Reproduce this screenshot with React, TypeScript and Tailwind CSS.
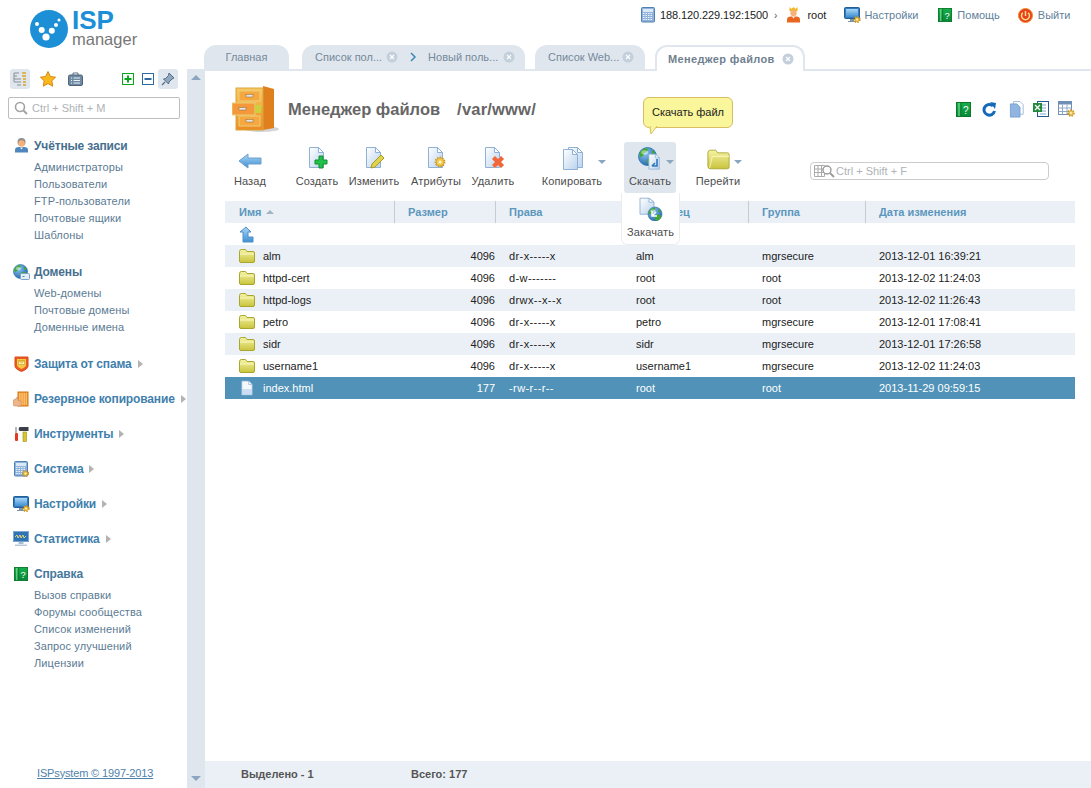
import type { ReactNode } from 'react';

const Gear = ({ x, y, r = 3 }: { x: number; y: number; r?: number }) => (
  <g>
    <circle cx={x} cy={y} r={r + 0.6} fill="none" stroke="#c8901e" strokeWidth={1.6} strokeDasharray="1.4 1.2" />
    <circle cx={x} cy={y} r={r} fill="#f2c94a" stroke="#c8901e" strokeWidth={0.6} />
    <circle cx={x} cy={y} r={r * 0.38} fill="#fff6cf" />
  </g>
);

const Ico = ({ w, h, vb, children }: { w: number; h: number; vb?: string; children: ReactNode }) => (
  <svg width={w} height={h} viewBox={vb ?? `0 0 ${w} ${h}`} className="shrink-0">
    {children}
  </svg>
);

const Page = ({ x = 0, y = 0 }: { x?: number; y?: number }) => (
  <g transform={`translate(${x} ${y})`}>
    <path d="M4.5 1.5h9l5 5v15h-14z" fill="url(#gPage)" stroke="#8fb1d6" />
    <path d="M13.5 1.5v5h5z" fill="#fff" stroke="#8fb1d6" />
  </g>
);

const Globe = ({ x, y, r }: { x: number; y: number; r: number }) => (
  <g transform={`translate(${x} ${y}) scale(${r / 8})`}>
    <circle r="8" fill="url(#gGlobe)" stroke="#1f6fa8" strokeWidth="0.7" />
    <path d="M-7-3c2-3 5-5 7-4 1 2-1 3-3 4 0 2-2 4-4 3zM1 1c3-1 6 0 6 2-1 3-4 5-6 4-2-2-1-4 0-6zM4-6l3 3-3 1z" fill="#43a82f" />
    <ellipse cx="-2.5" cy="-3.5" rx="3" ry="2" fill="#fff" opacity="0.45" />
  </g>
);

const Folder = () => (
  <Ico w={16} h={14}>
    <path d="M.5 2.5q0-2 2-2h4l1.5 2h6q1.500 0 1.500 1.500v8q0 1.500-1.500 1.500h-12q-1.500 0-1.500-1.500z" fill="url(#gFolder)" stroke="#a9a52e" />
    <path d="M1 5h14" stroke="#fbf9c0" />
  </Ico>
);

const SmallPage = () => (
  <Ico w={16} h={16} vb="0 0 23 23">
    <path d="M4 1.500h10l5 5v15h-15z" fill="#f4f8fd" stroke="#8fb1d6" />
    <path d="M14 1.500v5h5z" fill="#fff" stroke="#8fb1d6" />
    <path d="M4.500 13h14v8.500h-14z" fill="#b9d2ee" opacity="0.7" />
  </Ico>
);

const Book = ({ s = 15 }: { s?: number }) => (
  <Ico w={s} h={s} vb="0 0 15 15">
    <rect x=".5" y=".5" width="14" height="14" fill="url(#gGreen)" stroke="#0a7a2a" />
    <path d="M3 1v13" stroke="#8fe6a4" />
    <path d="M5 1v13" stroke="#0a7a2a" />
    <text x="9.700" y="11.500" textAnchor="middle" fontSize="10" fill="#fff" fontFamily="Liberation Sans">?</text>
  </Ico>
);

const Monitor = () => (
  <Ico w={17} h={16}>
    <rect x=".5" y=".5" width="15" height="11" rx="1" fill="#2f7cc0" stroke="#245e92" />
    <rect x="2" y="2" width="12" height="8" fill="url(#gBlue)" />
    <path d="M6 12h4v2h2v1h-8v-1h2z" fill="#7d94ad" />
    <Gear x={13} y={12.500} r={2.200} />
  </Ico>
);

const Calc = ({ gear }: { gear?: boolean }) => (
  <Ico w={15} h={16}>
    <rect x=".5" y=".5" width="13" height="14.500" rx="1" fill="#8fb3dc" stroke="#4f7fb5" />
    <rect x="2" y="2" width="10" height="3" fill="#dbe8f6" />
    {[6.500, 8.500, 10.500, 12.500].map((y) => (
      <path key={y} d={`M2 ${y}h10`} stroke="#eaf1fa" strokeDasharray="1.500 1" />
    ))}
    {gear && <Gear x={11.500} y={12.500} r={2.200} />}
  </Ico>
);

const UserIcon = ({ crown }: { crown?: boolean }) => (
  <Ico w={15} h={16}>
    {crown && <path d="M3.500 0l2 2 2-2 2 2 2-2v4h-8z" fill="#f2b41b" />}
    {!crown && <circle cx="7.500" cy="4" r="4" fill="#8f8f8f" />}
    <circle cx="7.500" cy={crown ? 6 : 5.500} r="3.200" fill="#f7b27a" />
    <path d={crown ? 'M1 15.500v-3q0-3 4-3h5q4 0 4 3v3z' : 'M1 14.500v-2.500q0-3 4-3h5q4 0 4 3v2.500z'} fill={crown ? '#e8661f' : '#4e86bd'} />
    <path d="M6 9.500l1.500 2 1.500-2z" fill="#fff" />
  </Ico>
);

const Triangle = () => (
  <span className="ml-[6px] inline-block h-0 w-0 border-y-[4px] border-l-[5px] border-y-transparent border-l-[#b3b3b3]" />
);

const DropArrow = () => (
  <span className="h-0 w-0 border-x-[4px] border-t-[4px] border-x-transparent border-t-[#8ba6c0]" />
);

const CloseX = () => (
  <svg width="12" height="12" viewBox="0 0 12 12" className="shrink-0">
    <circle cx="6" cy="6" r="5.500" fill="#c3cfdb" />
    <path d="M4 4l4 4M8 4l-4 4" stroke="#fff" strokeWidth="1.200" />
  </svg>
);

const navIcons: Record<string, ReactNode> = {
  user: <UserIcon />,
  domains: (
    <Ico w={17} h={16}>
      <Globe x={7.500} y={7.500} r={7} />
      <rect x="7.500" y="9.500" width="9" height="6" rx="1" fill="#e4eef8" stroke="#7fa3c8" />
      <path d="M9.500 12.500h2" stroke="#5f8ab5" />
    </Ico>
  ),
  spam: (
    <Ico w={15} h={16}>
      <path d="M1 1h13v9q0 3-6.500 5.500-6.500-2.500-6.500-5.500z" fill="#e95a24" stroke="#d94a1a" />
      <path d="M3 3h9v6q0 2-4.500 4-4.500-2-4.500-4z" fill="#f6c945" />
      <path d="M4.500 4.500h6v4h-6zM4.500 4.500l3 2.500 3-2.500" fill="#fff3b5" stroke="#c59a2a" strokeWidth=".6" />
    </Ico>
  ),
  backup: (
    <Ico w={17} h={16}>
      <rect x="5" y="1" width="10" height="14" fill="#f29a35" stroke="#cf7717" />
      {[3, 5, 7, 9, 11, 13].map((y) => (
        <path key={y} d={`M6 ${y}h8`} stroke="#ffe0a8" strokeDasharray="1.500 .8" />
      ))}
      <path d="M0 11q0-3 3-3l1-2 1 .5v3l3 .5v5h-6q-2 0-2-2z" fill="#eeb58c" stroke="#c98a5c" strokeWidth=".6" />
    </Ico>
  ),
  tools: (
    <Ico w={16} h={16}>
      <rect x="2" y="7" width="3" height="8" rx="1" fill="#e23b1f" />
      <path d="M3 1v6" stroke="#9aa5ad" strokeWidth="1.500" />
      <rect x="10" y="6" width="3.500" height="9.500" fill="#d9c72a" stroke="#9a8d14" strokeWidth=".6" />
      <path d="M6.500 1h9v4h-9l-1-2z" fill="#3b3f45" />
    </Ico>
  ),
  system: <Calc gear />,
  settings: <Monitor />,
  stats: (
    <Ico w={16} h={16}>
      <rect x=".5" y=".5" width="15" height="10" fill="#2e73b6" stroke="#7ea6cd" />
      <path d="M2 6l2-2 1 3 2-3 1 3 2-3 1 3 2-2" stroke="#ffe66b" fill="none" strokeWidth=".8" />
      <path d="M5.500 11h5v2h-5z" fill="#a8bdd2" />
      <path d="M2 13.500h12v1.500h-12z" fill="#b7c9db" />
    </Ico>
  ),
  help: <Book s={14} />,
};

type NavGroup = { icon: string; title: string; items?: string[]; color: string };

const nav: NavGroup[] = [
  {
    icon: 'user',
    title: 'Учётные записи',
    color: 'text-[#47708f]',
    items: ['Администраторы', 'Пользователи', 'FTP-пользователи', 'Почтовые ящики', 'Шаблоны'],
  },
  { icon: 'domains', title: 'Домены', color: 'text-[#47708f]', items: ['Web-домены', 'Почтовые домены', 'Доменные имена'] },
  { icon: 'spam', title: 'Защита от спама', color: 'text-[#3f80ad]' },
  { icon: 'backup', title: 'Резервное копирование', color: 'text-[#3f80ad]' },
  { icon: 'tools', title: 'Инструменты', color: 'text-[#3f80ad]' },
  { icon: 'system', title: 'Система', color: 'text-[#3f80ad]' },
  { icon: 'settings', title: 'Настройки', color: 'text-[#3f80ad]' },
  { icon: 'stats', title: 'Статистика', color: 'text-[#3f80ad]' },
  {
    icon: 'help',
    title: 'Справка',
    color: 'text-[#47789c]',
    items: ['Вызов справки', 'Форумы сообщества', 'Список изменений', 'Запрос улучшений', 'Лицензии'],
  },
];

const rows = [
  { name: 'alm', size: '4096', perm: 'dr-x-----x', owner: 'alm', group: 'mgrsecure', date: '2013-12-01 16:39:21' },
  { name: 'httpd-cert', size: '4096', perm: 'd-w-------', owner: 'root', group: 'root', date: '2013-12-02 11:24:03' },
  { name: 'httpd-logs', size: '4096', perm: 'drwx--x--x', owner: 'root', group: 'root', date: '2013-12-02 11:26:43' },
  { name: 'petro', size: '4096', perm: 'dr-x-----x', owner: 'petro', group: 'mgrsecure', date: '2013-12-01 17:08:41' },
  { name: 'sidr', size: '4096', perm: 'dr-x-----x', owner: 'sidr', group: 'mgrsecure', date: '2013-12-01 17:26:58' },
  { name: 'username1', size: '4096', perm: 'dr-x-----x', owner: 'username1', group: 'mgrsecure', date: '2013-12-02 11:24:03' },
];

const ToolItem = ({
  w,
  ml,
  label,
  icon,
  arrow,
}: {
  w: string;
  ml: string;
  label: string;
  icon: ReactNode;
  arrow?: string;
}) => (
  <div className={`${w} ${ml} relative flex h-[51px] shrink-0 flex-col items-center`}>
    <div className="flex h-[28px] items-end justify-center">{icon}</div>
    <div className="mt-[4px] text-[11px] leading-[14px] tracking-[0.12px] text-[#4d4d4d]">{label}</div>
    {arrow && (
      <span className={`absolute top-[18px] flex ${arrow}`}>
        <DropArrow />
      </span>
    )}
  </div>
);

export default function App() {
  return (
    <div className="relative flex h-[788px] w-[1091px] overflow-hidden bg-white font-['Liberation_Sans',sans-serif] text-[11px]">
      {/* shared gradients */}
      <svg width="0" height="0" className="absolute">
        <defs>
          <linearGradient id="gPage" x1="0" y1="0" x2="1" y2="1">
            <stop offset="0" stopColor="#ffffff" />
            <stop offset="1" stopColor="#b9d2ee" />
          </linearGradient>
          <linearGradient id="gFolder" x1="0" y1="0" x2="0" y2="1">
            <stop offset="0" stopColor="#f6f3a6" />
            <stop offset="1" stopColor="#c9c43c" />
          </linearGradient>
          <radialGradient id="gGlobe" cx="0.35" cy="0.3" r="0.8">
            <stop offset="0" stopColor="#8cc8f2" />
            <stop offset="1" stopColor="#1c5fa5" />
          </radialGradient>
          <linearGradient id="gGreen" x1="0" y1="0" x2="0" y2="1">
            <stop offset="0" stopColor="#17b04a" />
            <stop offset="1" stopColor="#07873a" />
          </linearGradient>
          <linearGradient id="gBlue" x1="0" y1="0" x2="0" y2="1">
            <stop offset="0" stopColor="#a9d6f7" />
            <stop offset="1" stopColor="#3f8fd2" />
          </linearGradient>
          <linearGradient id="gOrange" x1="0" y1="0" x2="0" y2="1">
            <stop offset="0" stopColor="#f8c860" />
            <stop offset="1" stopColor="#ee8a22" />
          </linearGradient>
        </defs>
      </svg>

      {/* Sidebar */}
      <aside className="flex h-full w-[187px] shrink-0 flex-col">
        <div className="flex h-[69px] items-start pl-[30px] pt-[10px]">
          <svg width="38" height="38" viewBox="0 0 38 38">
            <circle cx="19" cy="19" r="19" fill="#1d8fd6" />
            <circle cx="16" cy="27" r="3.600" fill="#fff" />
            <circle cx="11.700" cy="20" r="3" fill="#fff" />
            <circle cx="21.800" cy="20.700" r="3" fill="#fff" />
            <circle cx="7" cy="14" r="2" fill="#fff" />
            <circle cx="26" cy="15" r="2" fill="#fff" />
            <circle cx="29" cy="10" r="1.500" fill="#fff" />
          </svg>
          <div className="ml-[4px] flex flex-col">
            <span className="h-[20px] text-[26px] font-bold leading-[20px] text-[#1d8fd6]">ISP</span>
            <span className="h-[19px] text-[16.5px] leading-[19px] text-[#777]">manager</span>
          </div>
        </div>

        <div className="flex h-[20px] items-center pl-[10px]">
          <span className="flex h-[20px] w-[20px] items-center justify-center rounded-[3px] bg-[#dfe6ee]">
            <Ico w={14} h={14}>
              <path d="M1 1h5M1 4h3M4 7h4M4 10h4M4 13h4M1 1v6h3M1 7v3h3" stroke="#8a8f94" fill="none" />
              <path d="M9 1h4M9 4h4M10 7h3M10 10h3M10 13h3" stroke="#d9a52a" strokeWidth="1.500" />
            </Ico>
          </span>
          <span className="ml-[10px] flex">
            <Ico w={16} h={16}>
              <path d="M8 .5l2.400 5 5.200.7-3.800 3.600.9 5.400-4.700-2.600-4.700 2.600.9-5.400-3.800-3.600 5.200-.7z" fill="#f7b71d" stroke="#d88a10" />
            </Ico>
          </span>
          <span className="ml-[12px] flex">
            <Ico w={15} h={14}>
              <path d="M5 3v-2h5v2" fill="none" stroke="#5d7288" />
              <rect x=".5" y="3" width="14" height="10.500" rx="1.500" fill="#6f8aa3" stroke="#4d6378" />
              <path d="M3 6h1M3 8.500h1M3 11h1M5.500 6h6.500M5.500 8.500h6.500M5.500 11h6.500" stroke="#e9eff5" />
            </Ico>
          </span>
          <span className="ml-[39px] flex">
            <Ico w={12} h={12}>
              <rect x=".5" y=".5" width="11" height="11" fill="#fff" stroke="#0aa51f" />
              <path d="M6 2.500v7M2.500 6h7" stroke="#0aa51f" strokeWidth="2" />
            </Ico>
          </span>
          <span className="ml-[8px] flex">
            <Ico w={12} h={12}>
              <rect x=".5" y=".5" width="11" height="11" fill="#fff" stroke="#2f6a9f" />
              <path d="M2.500 6h7" stroke="#2f6a9f" strokeWidth="2" />
            </Ico>
          </span>
          <span className="ml-[4px] flex h-[20px] w-[20px] items-center justify-center rounded-[3px] bg-[#dfe6ee]">
            <Ico w={14} h={14}>
              <path d="M8 1l5 5-2 1-3 3-.5 2-5-5 2-.5 3-3z" fill="#8ea6be" stroke="#546c84" />
              <path d="M4 10l-3 3" stroke="#546c84" strokeWidth="1.200" />
            </Ico>
          </span>
        </div>

        <div className="ml-[8px] mt-[8px] flex h-[22px] w-[172px] items-center rounded-[2px] border border-[#bdbdbd] pl-[5px]">
          <Ico w={14} h={14}>
            <circle cx="6" cy="6" r="4.500" fill="none" stroke="#a3a3a3" strokeWidth="1.600" />
            <path d="M9.500 9.500l3.500 3.500" stroke="#a3a3a3" strokeWidth="2" />
          </Ico>
          <span className="ml-[4px] text-[11px] text-[#adb3b8]">Ctrl + Shift + M</span>
        </div>

        <nav className="mt-[17px]">
          {nav.map((g) => (
            <div key={g.title} className={g.items ? 'mb-[18px]' : 'mb-[15px]'}>
              <div className="flex h-[20px] items-center">
                <span className="flex w-[34px] shrink-0 justify-center pl-[8px]">{navIcons[g.icon]}</span>
                <span className={`whitespace-nowrap text-[12px] font-bold tracking-[-0.15px] ${g.color}`}>{g.title}</span>
                {!g.items && <Triangle />}
              </div>
              {g.items && (
                <ul className="mt-[3px] pl-[34px]">
                  {g.items.map((item) => (
                    <li key={item} className="h-[17px] text-[11px] leading-[17px] tracking-[0.12px] text-[#5b7b94]">
                      {item}
                    </li>
                  ))}
                </ul>
              )}
            </div>
          ))}
        </nav>

        <div className="mt-auto pb-[7px] pl-[37px]">
          <a className="text-[11px] leading-[15px] tracking-[-0.15px] text-[#4f82ab] underline">ISPsystem © 1997-2013</a>
        </div>
      </aside>

      {/* Splitter */}
      <div className="mt-[69px] flex w-[18px] shrink-0 flex-col items-center justify-between bg-[#dfe6ee] pb-[7px] pt-[6px]">
        <span className="h-0 w-0 border-x-[5px] border-b-[5px] border-x-transparent border-b-[#8ba6c0]" />
        <span className="h-0 w-0 border-x-[5px] border-t-[5px] border-x-transparent border-t-[#8ba6c0]" />
      </div>

      {/* Main */}
      <main className="flex min-w-0 flex-1 flex-col">
        <header className="mb-[15px] flex h-[30px] items-center pl-[436px] text-[11px]">
          <Calc />
          <span className="ml-[4px] tracking-[-0.1px] text-[#222]">188.120.229.192:1500</span>
          <span className="ml-[6px] text-[10px] text-[#555]">›</span>
          <span className="ml-[9px] flex"><UserIcon crown /></span>
          <span className="ml-[6px] text-[#222]">root</span>
          <span className="ml-[18px] flex"><Monitor /></span>
          <span className="ml-[3px] text-[#5f7f9a]">Настройки</span>
          <span className="ml-[20px] flex"><Book s={14} /></span>
          <span className="ml-[5px] text-[#5f7f9a]">Помощь</span>
          <span className="ml-[18px] flex">
            <Ico w={15} h={15}>
              <circle cx="7.500" cy="7.500" r="7" fill="#e8401c" stroke="#f08a2a" />
              <path d="M4.800 4.800a4 4 0 1 0 5.400 0M7.500 3v5" fill="none" stroke="#ffe08a" strokeWidth="1.500" />
            </Ico>
          </span>
          <span className="ml-[5px] text-[#5f7f9a]">Выйти</span>
        </header>

        {/* Tabs */}
        <div className="flex h-[26px] items-end border-b-2 border-[#dfe6ee] text-[11px] text-[#75899a]">
          <div className="-ml-px flex h-[24px] w-[85px] items-center justify-center rounded-t-[12px] bg-[#dfe6ee]">Главная</div>
          <div className="ml-[13px] flex h-[24px] w-[223px] items-center rounded-t-[12px] bg-[#dfe6ee] pl-[13px]">
            <span>Список пол...</span>
            <span className="ml-[4px] flex"><CloseX /></span>
            <svg width="8" height="10" viewBox="0 0 8 10" className="ml-[11px]">
              <path d="M2 1l4 4-4 4" fill="none" stroke="#3f86b8" strokeWidth="1.500" />
            </svg>
            <span className="ml-[11px]">Новый поль...</span>
            <span className="ml-[5px] flex"><CloseX /></span>
          </div>
          <div className="ml-[10px] flex h-[24px] w-[110px] items-center rounded-t-[12px] bg-[#dfe6ee] pl-[13px]">
            <span>Список Web...</span>
            <span className="ml-[3px] flex"><CloseX /></span>
          </div>
          <div className="-mb-[2px] ml-[10px] flex h-[26px] w-[150px] items-center rounded-t-[12px] border-2 border-b-0 border-[#dfe6ee] bg-white pl-[11px] font-bold tracking-[0.35px] text-[#6f8090]">
            <span>Менеджер файлов</span>
            <span className="ml-[7px] flex"><CloseX /></span>
          </div>
        </div>

        {/* Content */}
        <section className="relative flex-1 pl-[20px] pr-[16px]">
          <div className="mt-[14px] flex h-[48px] items-center">
            <svg width="48" height="48" viewBox="0 0 48 48" className="ml-[7px] shrink-0">
              <ellipse cx="30" cy="44" rx="17" ry="3" fill="#888" opacity="0.35" />
              <path d="M31 1l11 3v39l-11 2z" fill="#e07f1e" />
              <rect x="4" y="3" width="27" height="42" fill="url(#gOrange)" stroke="#d9a53a" />
              <rect x="7" y="6" width="21" height="10" fill="#f7a740" stroke="#e9cf78" />
              <rect x="7" y="31" width="21" height="10" fill="#f7a740" stroke="#e9cf78" />
              <rect x="0" y="18" width="23" height="12" fill="#f5983a" stroke="#e9cf78" />
              <rect x="23" y="20" width="6" height="8" fill="#c9d23e" />
              <rect x="14" y="9.500" width="7" height="2.500" fill="#e5e5e5" stroke="#8a6a3a" strokeWidth=".5" />
              <rect x="7" y="22.500" width="7" height="2.500" fill="#e5e5e5" stroke="#8a6a3a" strokeWidth=".5" />
              <rect x="14" y="34.500" width="7" height="2.500" fill="#e5e5e5" stroke="#8a6a3a" strokeWidth=".5" />
            </svg>
            <h1 className="ml-[8px] text-[16.5px] font-bold text-[#666]">Менеджер файлов</h1>
            <span className="ml-[17px] text-[16.5px] font-bold tracking-[0.2px] text-[#666]">/var/www/</span>
            <div className="ml-auto flex items-center">
              <Book s={15} />
              <span className="ml-[11px] flex">
                <Ico w={15} h={15}>
                  <path d="M12.500 9a5.300 5.300 0 1 1-1.500-5" fill="none" stroke="#1469b8" strokeWidth="3" />
                  <path d="M8 0l6 1-1 6z" fill="#1469b8" />
                </Ico>
              </span>
              <span className="ml-[11px] flex">
                <Ico w={16} h={17} vb="0 0 20 21">
                  <path d="M7 .5h8l4 4v12h-12z" fill="#fff" stroke="#8fb1d6" />
                  <path d="M3 3.500h8l4 4v12.500h-12z" fill="#8fb5e0" stroke="#6f9bcc" />
                </Ico>
              </span>
              <span className="ml-[9px] flex">
                <Ico w={16} h={16}>
                  <rect x="4.500" y=".5" width="11" height="15" fill="#fff" stroke="#1f5b92" />
                  <path d="M7 4h6M7 7h6M7 10h6M7 13h6" stroke="#7fa6cc" />
                  <rect x="0" y="2" width="9" height="9" fill="#1f8a3a" />
                  <path d="M2 4l5 5M7 4l-5 5" stroke="#fff" strokeWidth="1.300" />
                </Ico>
              </span>
              <span className="ml-[9px] flex">
                <Ico w={17} h={16}>
                  <rect x=".5" y=".5" width="13" height="13" fill="#fff" stroke="#6f8fb5" />
                  <rect x=".5" y=".5" width="13" height="3" fill="#6f8fb5" />
                  <path d="M4.500 3.500v10M9 3.500v10M.5 7h13M.5 10.500h13" stroke="#8eaacb" />
                  <Gear x={13} y={12} r={2.400} />
                </Ico>
              </span>
            </div>
          </div>

          {/* Toolbar */}
          <div className="mt-[9px] flex">
            <ToolItem
              w="w-[50px]"
              ml="ml-0"
              label="Назад"
              icon={
                <Ico w={24} h={20} vb="0 -3 24 20">
                  <path d="M1 8l9-7v4h13v6h-13v4z" fill="url(#gBlue)" stroke="#6f9fcf" />
                </Ico>
              }
            />
            <ToolItem
              w="w-[46px]"
              ml="ml-[19px]"
              label="Создать"
              icon={
                <Ico w={24} h={24}>
                  <Page />
                  <path d="M14 10h4v4h4v4h-4v4h-4v-4h-4v-4h4z" fill="#22c24a" stroke="#0f8f32" />
                </Ico>
              }
            />
            <ToolItem
              w="w-[56px]"
              ml="ml-[6px]"
              label="Изменить"
              icon={
                <Ico w={24} h={24}>
                  <Page />
                  <path d="M19 9l3 3-9 9-4 1 1-4z" fill="#e2d24a" stroke="#a99a24" />
                </Ico>
              }
            />
            <ToolItem
              w="w-[56px]"
              ml="ml-[6px]"
              label="Атрибуты"
              icon={
                <Ico w={24} h={24}>
                  <Page />
                  <Gear x={16} y={16} r={4} />
                </Ico>
              }
            />
            <ToolItem
              w="w-[46px]"
              ml="ml-[6px]"
              label="Удалить"
              icon={
                <Ico w={24} h={24}>
                  <Page />
                  <path d="M11 13l3-3 3 3 3-3 3 3-3 3 3 3-3 3-3-3-3 3-3-3 3-3z" fill="#f0673a" stroke="#e9a58c" strokeWidth=".6" />
                </Ico>
              }
            />
            <ToolItem
              w="w-[72px]"
              ml="ml-[20px]"
              label="Копировать"
              arrow="right-[2px]"
              icon={
                <Ico w={24} h={24}>
                  <Page x={4} y={0} />
                  <Page x={-1} y={2} />
                </Ico>
              }
            />
            <div className="relative ml-[16px] h-[51px] w-[52px] shrink-0 rounded-[3px] bg-[#dfe6ee]">
              <ToolItem
                w="w-[52px]"
                ml="ml-0"
                label="Скачать"
                arrow="right-[2px]"
                icon={
                  <Ico w={26} h={24}>
                    <Globe x={10.500} y={10.500} r={9} />
                    <g transform="translate(8.500 7) scale(.75)">
                      <Page />
                    </g>
                    <path d="M20 13v7h-5M15 20l3-3" stroke="#2f79bd" strokeWidth="1.600" fill="none" />
                  </Ico>
                }
              />
              {/* Upload drop-down */}
              <div className="absolute -left-[3px] top-[51px] z-10 flex h-[52px] w-[59px] flex-col items-center rounded-b-[6px] border border-t-0 border-[#e7edf3] bg-white">
                <div className="mt-[4px] flex">
                  <Ico w={24} h={24}>
                    <g transform="translate(-3.500 0) scale(1 .8)">
                      <Page />
                    </g>
                    <Globe x={16} y={17} r={7} />
                    <path d="M13 14v5h5M13 19l4-4" stroke="#fff" strokeWidth="1.400" fill="none" />
                  </Ico>
                </div>
                <span className="mt-[4px] text-[11px] leading-[14px] tracking-[0.12px] text-[#4d4d4d]">Закачать</span>
              </div>
            </div>
            <ToolItem
              w="w-[60px]"
              ml="ml-[12px]"
              label="Перейти"
              arrow="right-[6px]"
              icon={
                <Ico w={23} h={21} vb="0 0 26 23">
                  <path d="M1 4q0-3 3-3h6l2 3h11q2 0 2 2v14q0 2-2 2h-19q-3 0-3-3z" fill="url(#gFolder)" stroke="#a9a52e" />
                  <path d="M3 21l3-13h19" fill="none" stroke="#fbf9c0" />
                </Ico>
              }
            />
            <div className="ml-[62px] mt-[20px] flex h-[18px] w-[239px] items-center rounded-[4px] border border-[#ccc] pl-[3px]">
              <Ico w={21} h={14}>
                <path d="M.5 1.500h10v11h-10zM.5 5h10M.5 8.500h10M4 1.500v11M7.500 1.500v11" fill="none" stroke="#aaa" />
                <circle cx="13" cy="6" r="4" fill="#fff" stroke="#9a9a9a" strokeWidth="1.400" />
                <path d="M16 9l4 4" stroke="#9a9a9a" strokeWidth="1.800" />
              </Ico>
              <span className="ml-[1px] text-[11px] text-[#adb3b8]">Ctrl + Shift + F</span>
            </div>
          </div>

          {/* Table */}
          <div className="mt-[8px]">
            <div className="grid h-[22px] grid-cols-[169px_101px_127px_126px_117px_210px] items-stretch bg-[#ebf0f7] font-bold leading-[22px] text-[#5b96bd]">
              <div className="flex items-center pl-[14px]">
                Имя
                <span className="ml-[5px] h-0 w-0 border-x-[4px] border-b-[4px] border-x-transparent border-b-[#a3b3c2]" />
              </div>
              <div className="border-l border-[#c8ccd0] pl-[13px]">Размер</div>
              <div className="border-l border-[#c8ccd0] pl-[13px]">Права</div>
              <div className="border-l border-[#c8ccd0] pl-[13px]">Владелец</div>
              <div className="border-l border-[#c8ccd0] pl-[13px]">Группа</div>
              <div className="border-l border-[#c8ccd0] pl-[13px]">Дата изменения</div>
            </div>
            <div className="flex h-[22px] items-center pl-[13px]">
              <Ico w={17} h={17}>
                <path d="M8 1l5 5h-3v5h5v5h-10v-10h-3z" fill="url(#gBlue)" stroke="#4f8fc8" />
              </Ico>
            </div>
            {rows.map((r, i) => (
              <div
                key={r.name}
                className={`grid h-[22px] grid-cols-[169px_101px_127px_126px_117px_210px] items-center text-[#222] ${i % 2 === 0 ? 'bg-[#ebf0f7]' : 'bg-white'}`}
              >
                <div className="flex items-center pl-[14px]">
                  <Folder />
                  <span className="ml-[8px]">{r.name}</span>
                </div>
                <div className="text-right">{r.size}</div>
                <div className="pl-[14px] tracking-[0.4px]">{r.perm}</div>
                <div className="pl-[14px]">{r.owner}</div>
                <div className="pl-[14px]">{r.group}</div>
                <div className="pl-[14px]">{r.date}</div>
              </div>
            ))}
            <div className="grid h-[22px] grid-cols-[169px_101px_127px_126px_117px_210px] items-center bg-[#5193b8] text-white">
              <div className="flex items-center pl-[14px]">
                <SmallPage />
                <span className="ml-[8px]">index.html</span>
              </div>
              <div className="text-right">177</div>
              <div className="pl-[14px] tracking-[0.4px]">-rw-r--r--</div>
              <div className="pl-[14px]">root</div>
              <div className="pl-[14px]">root</div>
              <div className="pl-[14px]">2013-11-29 09:59:15</div>
            </div>
          </div>

          {/* Tooltip */}
          <div className="absolute left-[438px] top-[26px] z-20 flex h-[31px] w-[90px] items-center justify-center rounded-[6px] border border-[#d8bd62] bg-[#f9f69c] text-[11px] text-[#222]">
            Скачать файл
            <svg width="10" height="9" viewBox="0 0 10 9" className="absolute -bottom-[8px] left-[5px]">
              <path d="M0 0l1 8 7-8z" fill="#f9f69c" />
              <path d="M1 0l1 8 6-8" fill="none" stroke="#d8bd62" />
            </svg>
          </div>
        </section>

        <footer className="flex h-[27px] shrink-0 items-center bg-[#ebf0f7] pl-[36px] font-bold text-[#555]">
          <span className="w-[170px]">Выделено - 1</span>
          <span>Всего: 177</span>
        </footer>
      </main>
    </div>
  );
}
